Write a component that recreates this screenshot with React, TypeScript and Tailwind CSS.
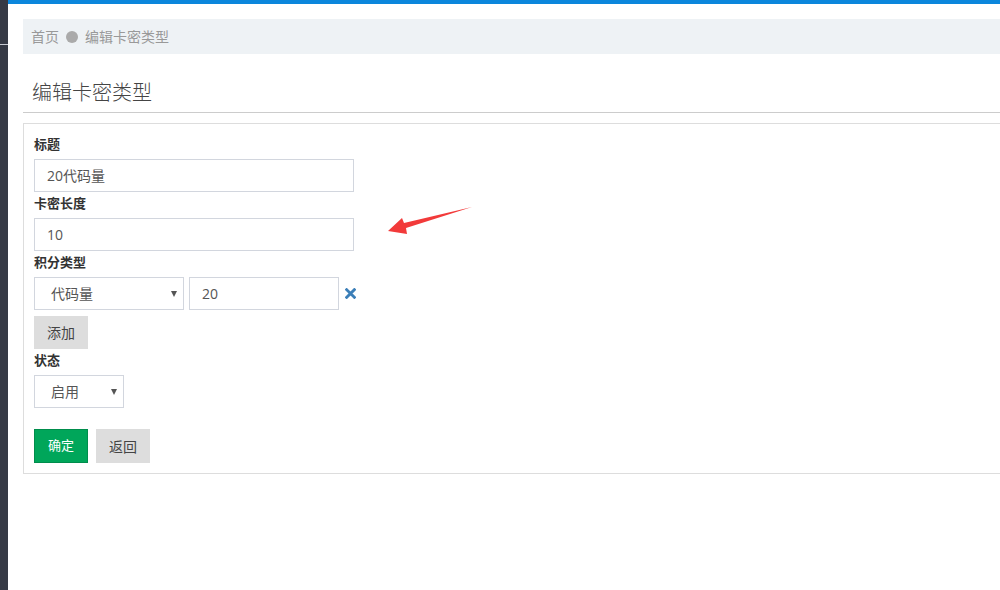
import React from 'react'

const FONT = { fontFamily: '"Open Sans", "Noto Sans CJK SC", sans-serif' }

function Label({ children }: { children: React.ReactNode }) {
  return <div className="h-[18px] mt-[2px] mb-[6px] text-[13px] leading-[18px] font-bold text-[#333]">{children}</div>
}

function TextInput({ value, width }: { value: string; width: string }) {
  return (
    <div className={`${width} h-[33px] border border-[#d2d6de] bg-white pl-[12px] flex items-center text-[14px] text-[#555]`}>
      {value}
    </div>
  )
}

function Select({ value, width }: { value: string; width: string }) {
  return (
    <div className={`${width} h-[33px] border border-[#d2d6de] bg-white pl-[16px] pr-[6px] flex items-center justify-between text-[14px] text-[#555]`}>
      <span>{value}</span>
      <span className="w-0 h-0 border-l-[3.5px] border-r-[3.5px] border-t-[6px] border-l-transparent border-r-transparent border-t-[#555]" />
    </div>
  )
}

export default function App() {
  return (
    <div className="relative flex w-[1000px] h-[590px] overflow-hidden bg-white" style={FONT}>
      {/* 侧边栏 */}
      <div className="w-[8px] h-full bg-[#363a45] flex flex-col">
        <div className="h-[44px]" />
        <div className="h-[1px] bg-[#c8cbd2]" />
      </div>

      <div className="flex-1 flex flex-col min-w-0">
        <div className="h-[4px] bg-[#0b86dc]" />

        <div className="pl-[15px] -mr-[10px]">
          {/* 面包屑 */}
          <div className="mt-[15px] h-[35px] bg-[#eef2f5] flex items-center pl-[8px] text-[14px] text-[#999]">
            <span>首页</span>
            <span className="w-[12px] h-[12px] rounded-full bg-[#aaa] mx-[7px]" />
            <span>编辑卡密类型</span>
          </div>

          {/* 标题 */}
          <div className="mt-[25px] pb-[5px] pl-[9px] border-b border-[#ccc] text-[20px] leading-[28px] font-light text-[#444]">
            编辑卡密类型
          </div>

          {/* 表单 */}
          <div className="mt-[10px] border border-[#ddd] pl-[10px] pt-[9px] pb-[10px]">
            <Label>标题</Label>
            <TextInput value="20代码量" width="w-[320px]" />
            <Label>卡密长度</Label>
            <TextInput value="10" width="w-[320px]" />
            <Label>积分类型</Label>
            <div className="flex items-center">
              <Select value="代码量" width="w-[150px]" />
              <div className="ml-[5px]">
                <TextInput value="20" width="w-[150px]" />
              </div>
              <svg className="ml-[6px] w-[11px] h-[11px]" viewBox="0 0 10 10">
                <path d="M1.5 1.5 L8.5 8.5 M8.5 1.5 L1.5 8.5" stroke="#3c7fb8" strokeWidth="2.6" strokeLinecap="square" />
              </svg>
            </div>
            <button className="mt-[6px] w-[54px] h-[33px] bg-[#ddd] text-[14px] text-[#444] block">添加</button>
            <Label>状态</Label>
            <Select value="启用" width="w-[90px]" />
            <div className="mt-[21px] flex gap-[8px]">
              <button className="w-[54px] h-[34px] bg-[#00a65a] border border-[#008d4c] text-[13px] text-white">确定</button>
              <button className="w-[54px] h-[34px] bg-[#ddd] text-[14px] text-[#444]">返回</button>
            </div>
          </div>
        </div>
      </div>

      {/* 红色箭头 */}
      <svg className="absolute left-0 top-0 pointer-events-none" width="1000" height="590">
        <polygon points="388,231 402,218 404,223 472,207 406,228 407,234" fill="#f23a3a" />
      </svg>
    </div>
  )
}
